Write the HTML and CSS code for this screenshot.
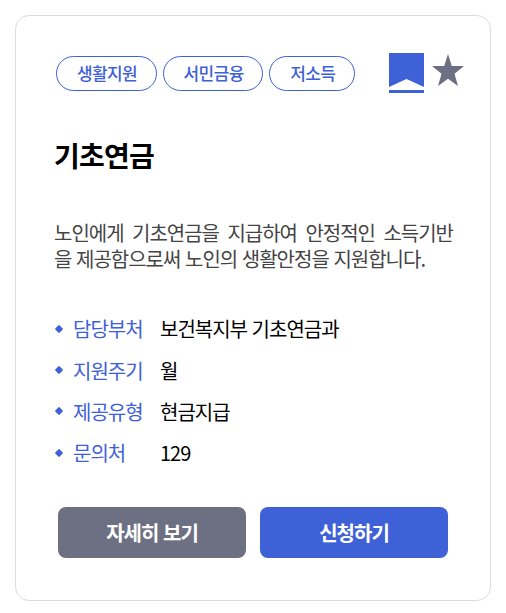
FILE: index.html
```html
<!DOCTYPE html>
<html lang="ko">
<head>
<meta charset="utf-8">
<title>기초연금</title>
<link rel="stylesheet" href="styles.css">
</head>
<body>
<article class="card">
  <header class="top">
    <ul class="tags"><li class="tag">생활지원</li><li class="tag">서민금융</li><li class="tag">저소득</li></ul>
    <div class="icons">
      <svg class="bookmark" width="35" height="40" viewBox="0 0 35 40"><path fill="#3e61d7" d="M0 0H35V34L17.500 26L0 34ZM0 37H35V40H0Z"/></svg>
      <svg class="star" width="34" height="33" viewBox="0 0 34 33"><path fill="#6d7083" d="M17 0L20.800 12H33L23.500 19.700L27 32L17 24.800L7 32L10.500 19.700L1 12H13.200Z"/></svg>
    </div>
  </header>
  <h2 class="title">기초연금</h2>
  <p class="desc">노인에게 기초연금을 지급하여 안정적인 소득기반을 제공함으로써 노인의 생활안정을 지원합니다.</p>
  <dl class="info">
    <div class="row"><dt>담당부처</dt><dd>보건복지부 기초연금과</dd></div>
    <div class="row"><dt>지원주기</dt><dd>월</dd></div>
    <div class="row"><dt>제공유형</dt><dd>현금지급</dd></div>
    <div class="row"><dt>문의처</dt><dd>129</dd></div>
  </dl>
  <div class="actions"><button class="btn detail">자세히 보기</button><button class="btn apply">신청하기</button></div>
</article>
</body>
</html>
```
FILE: styles.css
```css
* { box-sizing: border-box; margin: 0; padding: 0; }
body { background: #fff; font-family: "Noto Sans CJK KR", sans-serif; color: #000; }
.card { width: 476px; height: 586px; margin: 15px; padding: 37px 25px 0 38px; border: 1px solid #ddd; border-radius: 14px; }
.top { display: flex; justify-content: space-between; height: 40px; }
.tags { display: flex; gap: 6px; list-style: none; padding: 3px 0 0 2px; }
.tag { height: 35px; padding: 0 18.4px 0 20px; border: 1px solid #3e61d7; border-radius: 18px; color: #3e61d7; font-size: 17px; line-height: 32px; font-weight: 500; letter-spacing: -0.6px; white-space: nowrap; }
.icons { display: flex; gap: 7px; }
.star { margin-top: 1px; }
.title { margin-top: 42px; font-size: 28px; line-height: 40px; font-weight: 700; letter-spacing: -0.8px; }
.desc { width: 399px; margin-top: 45px; font-size: 20px; line-height: 26px; letter-spacing: -1px; text-align: justify; color: #444; }
.info { margin-top: 36px; }
.row { display: flex; align-items: center; height: 41.4px; font-size: 20px; font-weight: 400; letter-spacing: -1px; }
.row dt { width: 106px; padding-left: 19px; color: #3e61d7; position: relative; }
.row dt::before { content: ""; position: absolute; left: 2px; top: calc(50% - 3px); width: 6px; height: 6px; border-radius: 1px; background: #3e61d7; transform: rotate(45deg); }
.actions { display: flex; gap: 14px; margin: 33px 0 0 4px; }
.btn { width: 188px; height: 51px; padding-top: 1px; border: 0; border-radius: 8px; color: #fff; font: 700 20px/50px "Noto Sans CJK KR", sans-serif; letter-spacing: -1px; }
.detail { background: #6d7083; }
.apply { background: #3e61d7; }
```
